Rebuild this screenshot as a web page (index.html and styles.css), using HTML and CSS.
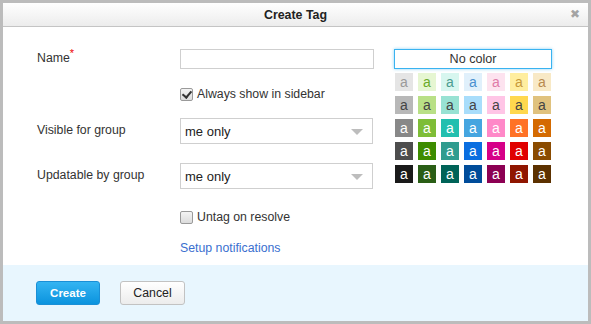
FILE: index.html
```html
<!DOCTYPE html>
<html lang="en">
<head>
  <meta charset="UTF-8">
  <title>Create Tag</title>
  <link rel="stylesheet" href="styles.css">
</head>
<body>
  <div class="dialog">
    <div class="dialog-header">
      <span class="dialog-title">Create Tag</span>
      <span class="dialog-close">&#x2716;</span>
    </div>
    <div class="dialog-body">
      <form class="tag-form">
        <div class="form-row row-name">
          <label class="form-label">Name<span class="req">*</span></label>
          <input class="text-input" type="text">
        </div>
        <div class="form-row row-always">
          <span class="form-label"></span>
          <label class="check"><input type="checkbox" checked> Always show in sidebar</label>
        </div>
        <div class="form-row row-visible">
          <label class="form-label">Visible for group</label>
          <div class="select-box"><select><option>me only</option></select></div>
        </div>
        <div class="form-row row-updatable">
          <label class="form-label">Updatable by group</label>
          <div class="select-box"><select><option>me only</option></select></div>
        </div>
        <div class="form-row row-untag">
          <span class="form-label"></span>
          <label class="check"><input type="checkbox"> Untag on resolve</label>
        </div>
        <div class="form-row row-link">
          <span class="form-label"></span>
          <a class="setup-link" href="#">Setup notifications</a>
        </div>
      </form>
      <div class="color-picker">
        <div class="no-color">No color</div>
        <div class="swatches">
          <span class="sw" style="background:#e5e5e5;color:#9a9a9a">a</span>
          <span class="sw" style="background:#e6f6d2;color:#6aaa2a">a</span>
          <span class="sw" style="background:#d7f6ef;color:#4a9c90">a</span>
          <span class="sw" style="background:#e0f0fb;color:#4a90d0">a</span>
          <span class="sw" style="background:#fde3ef;color:#e07aa8">a</span>
          <span class="sw" style="background:#ffee9f;color:#c89a3a">a</span>
          <span class="sw" style="background:#f8e9c6;color:#b88a50">a</span>

          <span class="sw" style="background:#b8b8b8;color:#444">a</span>
          <span class="sw" style="background:#b9e086;color:#444">a</span>
          <span class="sw" style="background:#98e2d3;color:#444">a</span>
          <span class="sw" style="background:#a8ddfb;color:#444">a</span>
          <span class="sw" style="background:#ffc5e6;color:#444">a</span>
          <span class="sw" style="background:#ffd84e;color:#444">a</span>
          <span class="sw" style="background:#e0c27e;color:#444">a</span>

          <span class="sw dark" style="background:#888888">a</span>
          <span class="sw dark" style="background:#7ebd37">a</span>
          <span class="sw dark" style="background:#22bfaf">a</span>
          <span class="sw dark" style="background:#45a5e0">a</span>
          <span class="sw dark" style="background:#ff88c8">a</span>
          <span class="sw dark" style="background:#ff7226">a</span>
          <span class="sw dark" style="background:#d46a00">a</span>

          <span class="sw dark" style="background:#4d4d4d">a</span>
          <span class="sw dark" style="background:#3d8c00">a</span>
          <span class="sw dark" style="background:#2f9c8f">a</span>
          <span class="sw dark" style="background:#0a6ee0">a</span>
          <span class="sw dark" style="background:#d60088">a</span>
          <span class="sw dark" style="background:#e00000">a</span>
          <span class="sw dark" style="background:#8a4b00">a</span>

          <span class="sw dark" style="background:#1a1a1a">a</span>
          <span class="sw dark" style="background:#2a5e16">a</span>
          <span class="sw dark" style="background:#006358">a</span>
          <span class="sw dark" style="background:#004c9a">a</span>
          <span class="sw dark" style="background:#8c0053">a</span>
          <span class="sw dark" style="background:#8f1500">a</span>
          <span class="sw dark" style="background:#5c3100">a</span>
        </div>
      </div>
    </div>
    <div class="dialog-footer">
      <button class="btn btn-primary">Create</button>
      <button class="btn">Cancel</button>
    </div>
  </div>
</body>
</html>
```

FILE: styles.css
```css
html, body {
  margin: 0;
  height: 100%;
}
body {
  background: #bcbcbc;
  font-family: Arial, 'Liberation Sans', sans-serif;
  font-size: 12.3px;
  color: #333;
  padding: 3px 3px 3px 3px;
  box-sizing: border-box;
}
.dialog {
  height: 318px;
  background: #fff;
  display: flex;
  flex-direction: column;
}
.dialog-header {
  height: 23px;
  border-bottom: 1px solid #c4c4c4;
  background: linear-gradient(#ffffff, #ececec);
  display: flex;
  align-items: center;
  justify-content: center;
  position: relative;
}
.dialog-title {
  font-weight: bold;
  color: #222;
  font-size: 12.4px;
}
.dialog-close {
  position: absolute;
  right: 8px;
  top: 4px;
  color: #a4a4a4;
  font-size: 12px;
}
.dialog-body {
  flex: 1;
  display: flex;
  padding-left: 34px;
}
.tag-form {
  width: 337px;
  padding-top: 22px;
}
.form-row {
  display: flex;
  align-items: center;
}
.form-label {
  width: 143px;
  flex-shrink: 0;
  color: #333;
}
.req {
  color: #e00;
  position: relative;
  top: -5px;
  font-size: 11px;
}
.row-name {
  height: 20px;
}
.row-name .form-label {
  padding-bottom: 2px;
}
.text-input {
  width: 194px;
  height: 20px;
  box-sizing: border-box;
  border: 1px solid #cfcfcf;
  margin: 0;
  padding: 2px 4px;
}
.row-always {
  margin-top: 13px;
  height: 24px;
}
.row-visible {
  margin-top: 12px;
  height: 26px;
}
.row-updatable {
  margin-top: 19px;
  height: 26px;
}
.row-visible .form-label,
.row-updatable .form-label {
  padding-bottom: 3px;
}
.row-untag {
  margin-top: 16px;
  height: 24px;
}
.row-link {
  margin-top: 9px;
  height: 20px;
}
.check {
  display: flex;
  align-items: center;
  gap: 4px;
  color: #333;
}
.check input {
  appearance: none;
  width: 13px;
  height: 13px;
  margin: 0;
  border: 1px solid #9a9a9a;
  border-radius: 2px;
  background: linear-gradient(#f4f4f4, #dcdcdc);
  position: relative;
}
.check input:checked::after {
  content: "";
  position: absolute;
  left: 3px;
  top: 0px;
  width: 4px;
  height: 7px;
  border: solid #333;
  border-width: 0 2px 2px 0;
  transform: rotate(40deg);
}
.select-box {
  width: 193px;
  height: 26px;
  position: relative;
}
.select-box select {
  appearance: none;
  width: 100%;
  height: 100%;
  border: 1px solid #cfcfcf;
  background: #fff;
  font-family: Arial, 'Liberation Sans', sans-serif;
  font-size: 13px;
  color: #222;
  padding: 0 4px;
  margin: 0;
  border-radius: 0;
}
.select-box::after {
  content: "";
  position: absolute;
  right: 10px;
  top: 11px;
  border-left: 6px solid transparent;
  border-right: 6px solid transparent;
  border-top: 6px solid #bdbdbd;
  pointer-events: none;
}
.setup-link {
  color: #3a6fcf;
  text-decoration: none;
}
.color-picker {
  margin-left: 20px;
  padding-top: 22px;
  width: 158px;
}
.no-color {
  height: 20px;
  box-sizing: border-box;
  border: 1px solid #39b3f0;
  box-shadow: 0 0 3px rgba(57, 179, 240, 0.6);
  text-align: center;
  line-height: 18px;
  font-size: 12.6px;
  color: #333;
}
.swatches {
  margin-top: 4px;
  margin-left: 1px;
  display: grid;
  grid-template-columns: repeat(7, 18px);
  grid-auto-rows: 18px;
  gap: 5px;
}
.sw {
  display: flex;
  align-items: center;
  justify-content: center;
  font-size: 14px;
  padding-bottom: 1px;
  box-sizing: border-box;
}
.sw.dark {
  color: #fff;
}
.dialog-footer {
  height: 56px;
  background: #e8f6fe;
  display: flex;
  align-items: flex-start;
  padding: 16px 0 0 33px;
  box-sizing: border-box;
  gap: 20px;
}
.btn {
  height: 24px;
  width: 65px;
  border: 1px solid #c2c2c2;
  border-radius: 3px;
  background: linear-gradient(#ffffff, #ececec);
  font-family: Arial, 'Liberation Sans', sans-serif;
  font-size: 12.3px;
  color: #222;
  padding: 0;
}
.btn-primary {
  width: 64px;
  border-color: #1a8fd6;
  background: linear-gradient(#34b4f2, #0b93de);
  color: #fff;
  font-weight: bold;
  font-size: 11.5px;
}
```
